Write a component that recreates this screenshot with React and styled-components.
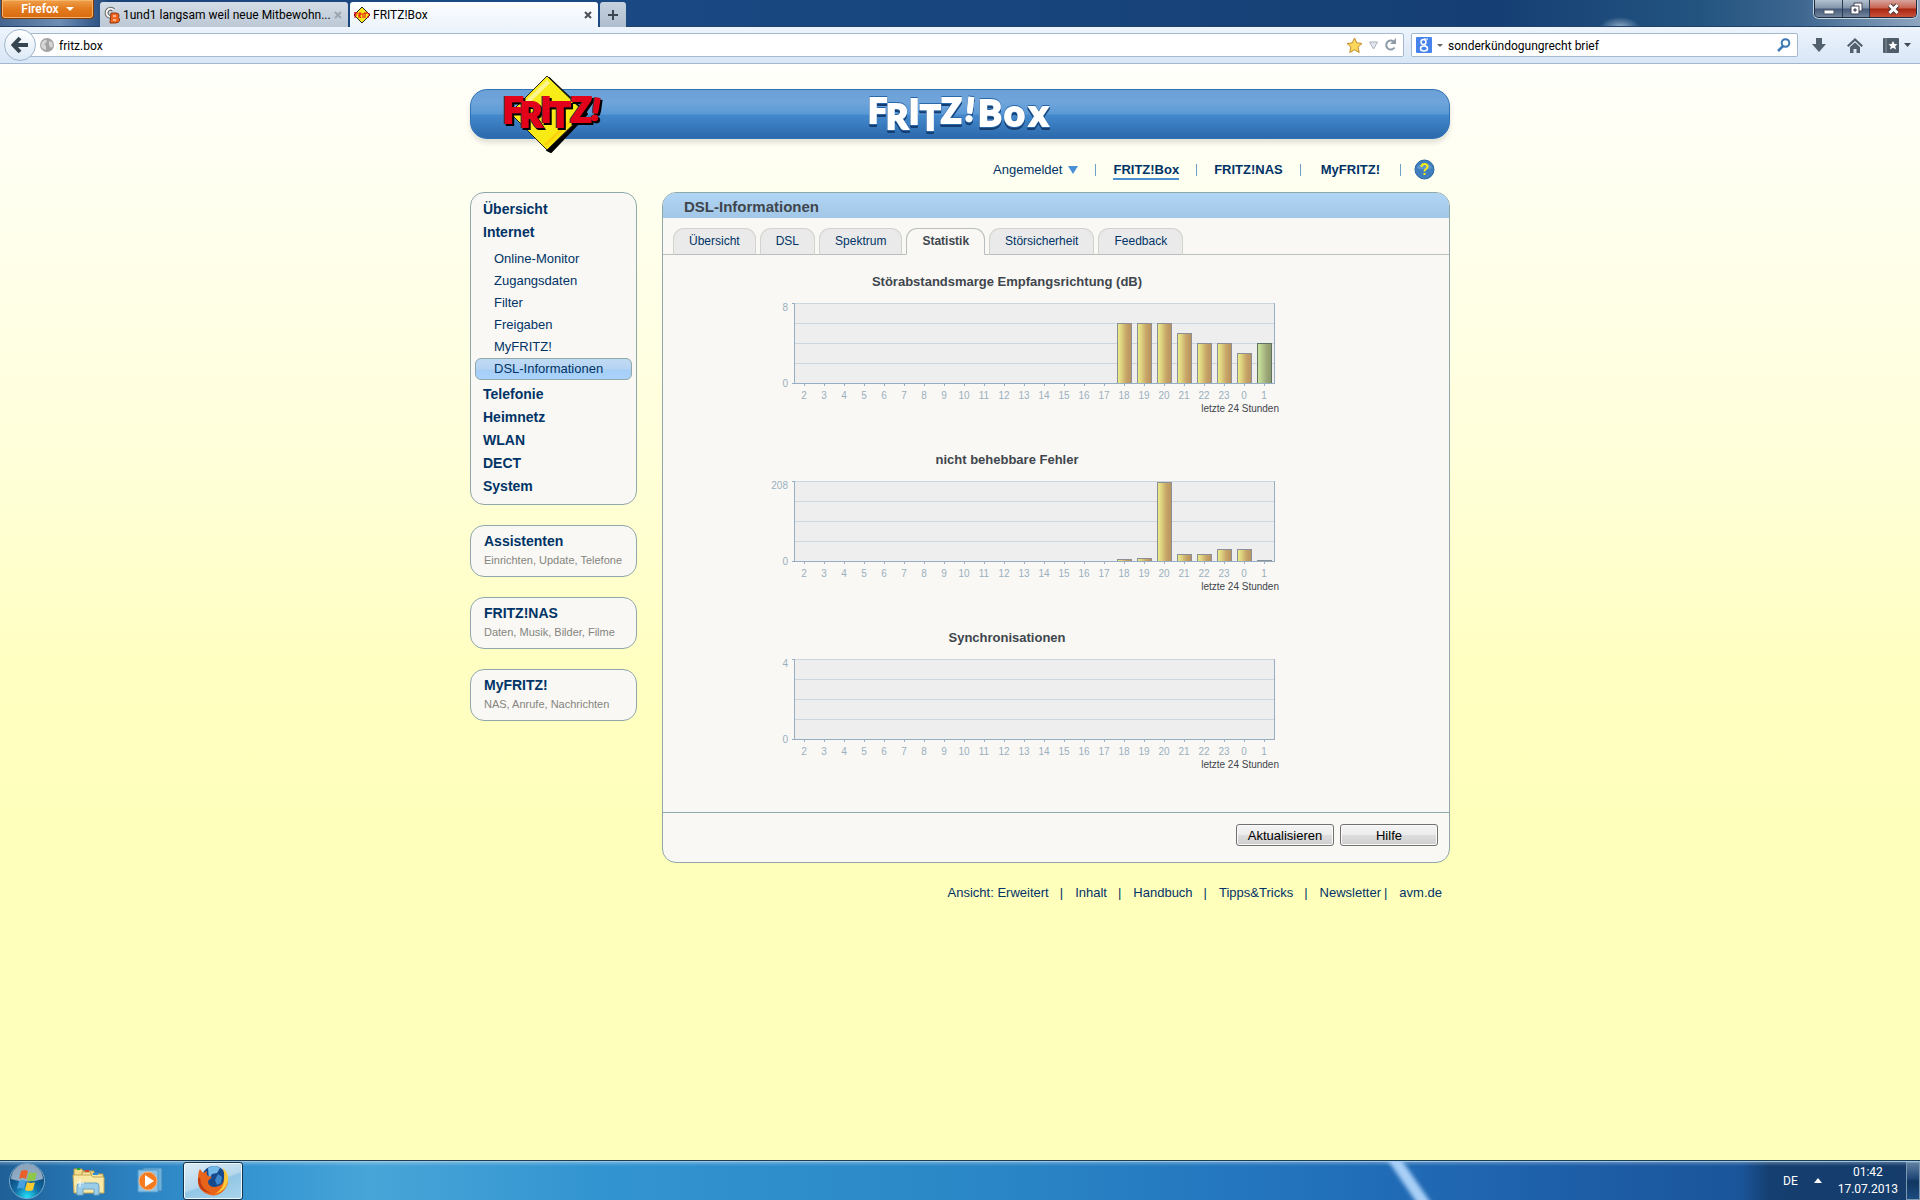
import React from 'react'
import styled, { createGlobalStyle, css } from 'styled-components'

const GlobalStyle = createGlobalStyle`
  * {
    box-sizing: border-box;
  }

  body {
    margin: 0;
    font-family: 'Liberation Sans', Arial, sans-serif;
    font-size: 13px;
  }

  button,
  input {
    font-family: inherit;
    margin: 0;
  }

  a {
    color: inherit;
    text-decoration: none;
  }

  h1,
  h2,
  p,
  ul {
    margin: 0;
    padding: 0;
  }

  svg {
    display: block;
    flex: none;
  }
`

const Desktop = styled.div`
  display: flex;
  flex-direction: column;
  min-height: 100vh;
`

/* ---- browser chrome ---- */

const TitleBar = styled.div`
  align-items: flex-start;
  background:
    radial-gradient(ellipse 20px 10px at 1620px 27px, #8fa8c2, transparent),
    linear-gradient(90deg, #45658f 0, #6d8db3 60px, #1c4378 110px, #1a4a85 500px, #153f74 1500px, #235480 1700px, #3d6690 1800px, #8ea6bf 100%);
  border-bottom: 1px solid #20426b;
  display: flex;
  font-family: Roboto, 'Noto Sans', sans-serif;
  font-size: 12px;
  height: 27px;
  padding-left: 1px;
`

const FirefoxButton = styled.button`
  align-items: center;
  background: linear-gradient(#f0a04c, #e27a1c 50%, #d86a10);
  border: 1px solid #7c3c0e;
  border-radius: 0 0 4px 4px;
  border-top: 0;
  box-shadow: inset 0 0 0 1px #f7b56a;
  color: #fff;
  display: flex;
  font-size: 12px;
  font-weight: 600;
  gap: 7px;
  height: 19px;
  justify-content: center;
  line-height: 16px;
  padding: 0;
  width: 93px;
`

const BrowserTabs = styled.div`
  display: flex;
  gap: 2px;
  margin-left: 6px;
  padding-top: 2px;
`

const BrowserTab = styled.div`
  align-items: center;
  background: ${(props) => (props.$active ? 'linear-gradient(#fdfeff, #edf3fb)' : 'linear-gradient(#d3dce6, #bcc8d5)')};
  border-radius: 3px 3px 0 0;
  color: #000;
  display: flex;
  gap: 3px;
  height: ${(props) => (props.$active ? '26px' : '25px')};
  padding: 0 6px 0 4px;
  width: 248px;
`

const BrowserTabTitle = styled.span`
  flex: 1;
  white-space: nowrap;
`

const PlainButton = styled.button`
  align-items: center;
  background: none;
  border: 0;
  display: flex;
  justify-content: center;
  padding: 0;
`

const NewTab = styled(PlainButton)`
  background: linear-gradient(#c5d1de, #aebdce);
  border-radius: 3px 3px 0 0;
  height: 25px;
  width: 26px;
`

const WindowControls = styled.div`
  border: 1px solid #1d2b3d;
  border-radius: 0 0 5px 5px;
  border-top: 0;
  box-shadow: 0 0 0 1px #c4d3e2;
  display: flex;
  height: 18px;
  margin-left: auto;
  margin-right: 3px;
  overflow: hidden;
`

const WindowButton = styled(PlainButton)`
  background: ${(props) =>
    props.$close
      ? 'linear-gradient(#d8a69e, #c8604e 48%, #a8250f 52%, #c9513a)'
      : 'linear-gradient(#b3c1d0, #8294aa 48%, #46597a 52%, #72879f)'};
  border-left: ${(props) => (props.$first ? '0' : '1px solid #2b3b50')};
  height: 100%;
  width: ${(props) => (props.$close ? '47px' : '27px')};
`

const NavBar = styled.div`
  align-items: center;
  background: linear-gradient(#edf4fc, #d8e6f6);
  border-bottom: 1px solid #a3b8cf;
  color: #000;
  display: flex;
  font-family: Roboto, 'Noto Sans', sans-serif;
  height: 37px;
  padding: 0 9px 0 4px;
`

const BackButton = styled(PlainButton)`
  background: linear-gradient(#fff, #dce9f7);
  border: 1px solid #9fb5cb;
  border-radius: 50%;
  height: 32px;
  width: 32px;
  z-index: 1;
`

const Field = styled.div`
  align-items: center;
  background: #fff;
  border: 1px solid #a4b9d0;
  border-radius: 2px;
  display: flex;
  gap: 5px;
  height: 24px;
  padding: 0 6px 0 4px;
`

const AddressField = styled(Field)`
  flex: 1;
  margin-left: -7px;
  margin-right: 7px;
  padding-left: 10px;
`

const SearchField = styled(Field)`
  margin-right: 13px;
  width: 387px;
`

const FieldInput = styled.input`
  background: none;
  border: 0;
  color: #000;
  flex: 1;
  font-size: 12px;
  min-width: 0;
  outline: 0;
  padding: 1px 0 0;
`

const ToolbarIcons = styled.div`
  align-items: center;
  display: flex;
  gap: 20px;
`

/* ---- router page ---- */

const Page = styled.div`
  background: linear-gradient(#fffffb 0, #fffff2 100px, #ffffdb 380px, #ffffc2 600px, #ffffbc 760px);
  flex: 1;
  padding: 25px 16px 0;
`

const Container = styled.div`
  color: #003366;
  margin: 0 auto;
  max-width: 980px;
`

const Banner = styled.header`
  background: linear-gradient(#6aa0d6, #6fa5da 12px, #5a99d6 24px, #4489cd 25px, #2b69ac);
  border: 1px solid #2f72b6;
  border-radius: 17px;
  box-shadow: 0 4px 5px #0000001f;
  display: flex;
  height: 50px;
  justify-content: center;
  position: relative;
`

const LogoLink = styled.a`
  left: 28px;
  position: absolute;
  top: -15px;
`

const Lettering = styled.svg`
  font-family: Lato, sans-serif;
  font-weight: 900;
  overflow: visible;
`

const RedLetters = styled.g`
  fill: #e2001a;
  filter: drop-shadow(-1px 0 0 #333) drop-shadow(2px 2px 0 #000);
  stroke: #e2001a;
  stroke-width: 2px;
`

const WhiteLetters = styled.g`
  fill: #fff;
  filter: drop-shadow(0 -1px 0 #2a68aa) drop-shadow(0 1px 0 #2a68aa) drop-shadow(0 2px 0 #153f73);
  stroke: #fff;
  stroke-width: 2px;
`

const TopNav = styled.nav`
  align-items: center;
  display: flex;
  gap: 13px;
  height: 53px;
  justify-content: flex-end;
  padding: 8px 15px 0 0;
`

const TopLinks = styled.div`
  align-items: center;
  display: flex;
  gap: 17px;
`

const TopLink = styled.a`
  align-items: center;
  border-bottom: 2px solid ${(props) => (props.$current ? '#4a8fd0' : 'transparent')};
  display: flex;
  font-weight: ${(props) => (props.$light ? 'normal' : 'bold')};
  gap: 6px;
  line-height: 16px;
  margin: ${(props) => (props.$spaced ? '0 3px' : '0')};
  padding-top: 3px;
`

const Divider = styled.span`
  background: #6f9fca;
  height: 12px;
  width: 1px;
`

const Columns = styled.div`
  align-items: start;
  display: grid;
  gap: 25px;
  grid-template-columns: 167px minmax(0, 1fr);
`

const Sidebar = styled.aside`
  display: grid;
  gap: 20px;
`

const cardLook = css`
  background: #f9f8f4;
  border: 1px solid #8fa8a9;
  border-radius: 14px;
`

const Menu = styled.ul`
  ${cardLook}
  list-style: none;
  padding: 5px 4px 6px;
`

const MenuLink = styled.a`
  display: block;
  font-size: 14px;
  font-weight: bold;
  line-height: 23px;
  padding-left: 8px;
`

const SubMenu = styled.ul`
  list-style: none;
  padding: 4px 0 3px;
`

const SubLink = styled.a`
  border: 1px solid transparent;
  border-radius: 6px;
  display: block;
  line-height: 20px;
  padding-left: 18px;
  ${(props) =>
    props.$current &&
    css`
      background: linear-gradient(#c0daf4, #b5d4f2 50%, #a6cef6 55%, #aad3fd);
      border-color: #8fa8a9;
    `}
`

const ShortcutCard = styled.a`
  ${cardLook}
  display: block;
  padding: 6px 0 7px 13px;
`

const ShortcutTitle = styled.span`
  display: block;
  font-size: 14px;
  font-weight: bold;
  line-height: 19px;
`

const ShortcutText = styled.span`
  color: #85857f;
  display: block;
  font-size: 11px;
  line-height: 18px;
  white-space: nowrap;
`

const Panel = styled.main`
  ${cardLook}
  overflow: hidden;
`

const PanelTitle = styled.h1`
  background: linear-gradient(#b0d5f5, #a3c7e6);
  color: #3f464d;
  font-size: 15px;
  line-height: 25px;
  padding: 1px 0 0 21px;
  height: 25px;
`

const TabRow = styled.div`
  border-bottom: 1px solid #b9bfbf;
  display: flex;
  gap: 4px;
  padding: 10px 10px 0;
`

const Tab = styled.button`
  background: ${(props) => (props.$active ? '#f9f8f4' : '#eaeaea')};
  border: 1px solid ${(props) => (props.$active ? '#b9bfbf' : '#d2d2ce')};
  border-bottom-color: ${(props) => (props.$active ? '#f9f8f4' : '#b9bfbf')};
  border-radius: 11px 11px 0 0;
  color: ${(props) => (props.$active ? '#3f464d' : '#003366')};
  font-size: 12px;
  font-weight: ${(props) => (props.$active ? 'bold' : 'normal')};
  height: 27px;
  margin-bottom: -1px;
  padding: 0 15px 2px;
`

const Charts = styled.div`
  padding: 17px 0 6px 72px;
`

const ChartBlock = styled.section`
  height: 178px;
  width: 544px;
`

const ChartTitle = styled.h2`
  color: #3f464d;
  font-size: 13px;
  line-height: 20px;
  margin-bottom: 4px;
  text-align: center;
`

const ChartNote = styled.p`
  color: #3f464d;
  font-size: 10px;
  line-height: 12px;
  text-align: right;
`

const Actions = styled.div`
  border-top: 1px solid #8fa8a9;
  display: flex;
  gap: 6px;
  justify-content: flex-end;
  padding: 11px 11px 16px;
`

const ActionButton = styled.button`
  background: linear-gradient(#f4f4f4, #ececec 48%, #dddddd 52%, #cfcfcf);
  border: 1px solid #707070;
  border-radius: 3px;
  box-shadow: inset 0 0 0 1px #fbfbfb;
  color: #000;
  font-size: 13px;
  height: 22px;
  padding: 0;
  width: 98px;
`

const Footer = styled.footer`
  display: flex;
  justify-content: flex-end;
  line-height: 16px;
  padding: 22px 8px 22px 0;
`

const FooterBar = styled.span`
  margin: 0 12px 0 ${(props) => (props.$tight ? '3px' : '11px')};
`

/* ---- taskbar ---- */

const Taskbar = styled.div`
  align-items: center;
  background:
    linear-gradient(#ffffff55, transparent 5px),
    linear-gradient(90deg, #1f5f96 0, #2470ad 60px, #2e86c4 150px, #3596d2 260px, #48a5d8 370px, #3294d0 600px, #2a86c6 1000px, #2272bc 1300px, #1f63ae 1500px, #1a559a 1740px, #153f70 1770px, #153c6a 100%);
  border-top: 1px solid #1c3d56;
  box-shadow: inset 0 1px 0 #9cc4df;
  color: #fff;
  display: flex;
  font-family: Roboto, 'Noto Sans', sans-serif;
  font-size: 12px;
  gap: 2px;
  height: 40px;
  overflow: hidden;
  position: relative;
`

const Streak = styled.svg`
  left: 1383px;
  position: absolute;
  top: 0;
`

const TaskButton = styled(PlainButton)`
  height: 38px;
  width: 60px;
  ${(props) =>
    props.$active &&
    css`
      background: linear-gradient(160deg, #dcebf5, #b7d8ec 50%, #93c7e6 55%, #a9d5ec);
      border: 1px solid #16324a;
      border-radius: 3px;
      box-shadow: inset 0 0 0 1px #eef7fc;
    `}
`

const StartButton = styled(PlainButton)`
  margin-left: 8px;
  margin-right: 11px;
  width: 38px;
`

const Tray = styled.div`
  align-items: center;
  display: flex;
  gap: 16px;
  height: 100%;
  margin-left: auto;
`

const Clock = styled.div`
  line-height: 17px;
  margin-right: -8px;
  padding-top: 1px;
  text-align: center;
`

const ShowDesktop = styled(PlainButton)`
  background: linear-gradient(#5f7f9f, #1c4474 45%, #12365f 50%, #1c4b80);
  border: 1px solid #7d99b4;
  height: 38px;
  width: 14px;
`

const hours = [2, 3, 4, 5, 6, 7, 8, 9, 10, 11, 12, 13, 14, 15, 16, 17, 18, 19, 20, 21, 22, 23, 0, 1]

// bars holds the pixel height for each hour that has a value
const charts = [
  {
    id: 'margin',
    title: 'Störabstandsmarge Empfangsrichtung (dB)',
    max: 8,
    bars: { 18: 60, 19: 60, 20: 60, 21: 50, 22: 40, 23: 40, 0: 30, 1: 40 },
    highlight: 1,
  },
  {
    id: 'errors',
    title: 'nicht behebbare Fehler',
    max: 208,
    bars: { 18: 2, 19: 3, 20: 79, 21: 7, 22: 7, 23: 12, 0: 12, 1: 1 },
  },
  { id: 'syncs', title: 'Synchronisationen', max: 4, bars: {} },
]

const subItems = ['Online-Monitor', 'Zugangsdaten', 'Filter', 'Freigaben', 'MyFRITZ!', 'DSL-Informationen']

const shortcuts = [
  { title: 'Assistenten', text: 'Einrichten, Update, Telefone' },
  { title: 'FRITZ!NAS', text: 'Daten, Musik, Bilder, Filme' },
  { title: 'MyFRITZ!', text: 'NAS, Anrufe, Nachrichten' },
]

const tabs = ['Übersicht', 'DSL', 'Spektrum', 'Statistik', 'Störsicherheit', 'Feedback']

const LEFT = 59
const TOP = 7
const BASE = 87

function Chart({ id, title, max, bars, highlight }) {
  return (
    <ChartBlock>
      <ChartTitle>{title}</ChartTitle>
      <svg width="544" height="107" shapeRendering="crispEdges" fontSize="10" fill="#9aafc0">
        <defs>
          <linearGradient id={`${id}-bar`}>
            <stop offset="0.1" stopColor="#e8e488" />
            <stop offset="0.65" stopColor="#c6a468" />
            <stop offset="1" stopColor="#b9945e" />
          </linearGradient>
          <linearGradient id={`${id}-now`}>
            <stop offset="0.1" stopColor="#c6dc98" />
            <stop offset="0.7" stopColor="#9aa678" />
            <stop offset="1" stopColor="#8e9a6c" />
          </linearGradient>
        </defs>
        <rect x={LEFT} y={TOP} width="480" height="80" fill="#eeeeee" />
        {[0, 20, 40, 60].map((y) => (
          <rect key={y} x={LEFT} y={TOP + y} width="480" height="1" fill="#ccd6df" />
        ))}
        {hours.map((hour, i) => {
          const x = LEFT + 3 + i * 20
          const height = bars[hour]
          const now = hour === highlight
          return (
            <g key={hour}>
              {height && (
                <>
                  <rect x={x} y={BASE - height} width="15" height={height} fill={now ? '#5d7263' : '#8c9096'} />
                  <rect
                    x={x + 1}
                    y={BASE - height + 1}
                    width="13"
                    height={height - 1}
                    fill={`url(#${id}-${now ? 'now' : 'bar'})`}
                  />
                </>
              )}
              <rect x={x + 7} y={BASE} width="1" height="3" fill="#98aec4" />
              <text x={x + 7} y={BASE + 16} textAnchor="middle">
                {hour}
              </text>
            </g>
          )
        })}
        <rect x={LEFT} y={TOP} width="1" height="81" fill="#98aec4" />
        <rect x={LEFT + 480} y={TOP} width="1" height="81" fill="#98aec4" />
        <rect x={LEFT - 2} y={TOP} width="3" height="1" fill="#98aec4" />
        <rect x={LEFT - 2} y={BASE} width="483" height="1" fill="#98aec4" />
        <text x="53" y={TOP + 8} textAnchor="end">
          {max}
        </text>
        <text x="53" y={BASE + 4} textAnchor="end">
          0
        </text>
      </svg>
      <ChartNote>letzte 24 Stunden</ChartNote>
    </ChartBlock>
  )
}

function FritzLogo() {
  return (
    <Lettering width="112" height="84" aria-label="FRITZ!">
      <defs>
        <linearGradient id="diamond" x1="0" y1="0" x2="1" y2="1">
          <stop offset="0" stopColor="#fff799" />
          <stop offset="0.25" stopColor="#f8ec1c" />
          <stop offset="0.7" stopColor="#f8ea12" />
          <stop offset="1" stopColor="#fbb80f" />
        </linearGradient>
      </defs>
      <path d="M50 3 88 39 52 77 48 75z" fill="#000" stroke="#000" strokeWidth="2" strokeLinejoin="round" />
      <path d="M48 1 86 38 48 75 11 38z" fill="url(#diamond)" stroke="#222" strokeLinejoin="round" />
      <path d="M48 5 51 8 22 36 14 38z" fill="#fffbc0" opacity="0.7" />
      <path d="M47 71 82 38 78 38 45 69z" fill="#fbc90c" opacity="0.8" />
      <RedLetters>
        <text x="4" y="48" fontSize="36">F</text>
        <text x="21" y="52" fontSize="34">R</text>
        <text x="42" y="47" fontSize="34">I</text>
        <text x="51" y="52" fontSize="34">T</text>
        <text x="72" y="47" fontSize="34">Z</text>
        <text x="92" y="45" fontSize="30" transform="rotate(8 96 40)">!</text>
      </RedLetters>
    </Lettering>
  )
}

function BannerTitle() {
  return (
    <Lettering width="188" height="48" aria-label="FRITZ!Box">
      <WhiteLetters>
        <text x="2" y="33" fontSize="34">F</text>
        <text x="20" y="39" fontSize="34">R</text>
        <text x="43" y="34" fontSize="34">I</text>
        <text x="54" y="40" fontSize="34">T</text>
        <text x="75" y="33" fontSize="34">Z</text>
        <text x="99" y="31" fontSize="32" transform="rotate(6 104 24)">!</text>
        <text x="112" y="36" fontSize="36">B</text>
        <text x="138" y="36" fontSize="36">o</text>
        <text x="163" y="36" fontSize="36">x</text>
      </WhiteLetters>
    </Lettering>
  )
}

function Triangle({ color, up, width = 7, height = 4 }) {
  return (
    <svg width={width} height={height} viewBox="0 0 10 6" preserveAspectRatio="none">
      <path d={up ? 'M0 6h10L5 0z' : 'M0 0h10L5 6z'} fill={color} />
    </svg>
  )
}

function CloseMark({ color }) {
  return (
    <svg width="8" height="8" viewBox="0 0 8 8">
      <path d="M1 1l6 6M7 1L1 7" stroke={color} strokeWidth="2" />
    </svg>
  )
}

function BrowserChrome() {
  return (
    <>
      <TitleBar>
        <FirefoxButton>
          Firefox
          <Triangle color="#fff" width={8} />
        </FirefoxButton>
        <BrowserTabs>
          <BrowserTab>
            <svg width="16" height="18">
              <path d="M9.500 4A4 4 0 1 0 9 10" fill="none" stroke="#666" strokeWidth="4" />
              <path d="M9.500 4A4 4 0 1 0 9 10" fill="none" stroke="#f5f5f5" strokeWidth="2" />
              <path d="M7 7h5q3 0 3 2.500 0 1.500-1 2 2 .5 1.500 3-.5 2.500-4 2.500H6z" fill="#f2661c" stroke="#8d3510" />
              <path d="M9 10h3M9 14h3" stroke="#fff" strokeWidth="1" />
            </svg>
            <BrowserTabTitle>1und1 langsam weil neue Mitbewohn...</BrowserTabTitle>
            <CloseMark color="#9aa6b2" />
          </BrowserTab>
          <BrowserTab $active>
            <svg width="16" height="16">
              <path d="M8 0l8 8-8 8-8-8z" fill="#f8e71c" stroke="#222" />
              <path d="M0 6h4M1 5v6M1 8h2M5 6v5M5 6h2v2H5l2 3M9 6v5M10 6h4M11 6v5M13 10h2M15 6v3" stroke="#e2001a" fill="none" />
            </svg>
            <BrowserTabTitle>FRITZ!Box</BrowserTabTitle>
            <CloseMark color="#4a4f57" />
          </BrowserTab>
          <NewTab aria-label="Neuer Tab">
            <svg width="10" height="10">
              <path d="M5 0v10M0 5h10" stroke="#3c4650" strokeWidth="2" />
            </svg>
          </NewTab>
        </BrowserTabs>
        <WindowControls>
          <WindowButton $first aria-label="Minimieren">
            <svg width="12" height="12">
              <rect x="1" y="7" width="10" height="4" fill="#fff" stroke="#4a5565" />
            </svg>
          </WindowButton>
          <WindowButton aria-label="Verkleinern">
            <svg width="13" height="13">
              <path d="M4 1h8v8H4z" fill="#fff" stroke="#445" />
              <path d="M1 4h8v8H1z" fill="#fff" stroke="#445" />
              <path d="M4 7h2v2H4z" fill="#8593a5" stroke="#445" />
            </svg>
          </WindowButton>
          <WindowButton $close aria-label="Schließen">
            <svg width="13" height="12">
              <path d="M2.500 2l8 8M10.500 2l-8 8" stroke="#4c3a3a" strokeWidth="5" />
              <path d="M2.500 2l8 8M10.500 2l-8 8" stroke="#fff" strokeWidth="3" />
            </svg>
          </WindowButton>
        </WindowControls>
      </TitleBar>
      <NavBar>
        <BackButton aria-label="Zurück">
          <svg width="18" height="18">
            <path d="M9 2L2.500 9 9 16M3 9h14" fill="none" stroke="#36454f" strokeWidth="4" />
          </svg>
        </BackButton>
        <AddressField>
          <svg width="14" height="14">
            <circle cx="7" cy="7" r="7" fill="#a3a3a3" />
            <path d="M2 4q3-3 5-2l-1 3-2 1 2 2v4Q1 11 1 7zM9 3l3 1 1 4-2 2-2-3z" fill="#d6d6d6" />
          </svg>
          <FieldInput aria-label="Adresse" defaultValue="fritz.box" />
          <svg width="17" height="17" viewBox="0 0 17 17">
            <path d="M8.500 1l2.300 4.900 5.200.6-3.900 3.600 1.100 5.400-4.700-2.700-4.700 2.700 1.100-5.400L1 6.500l5.200-.6z" fill="#fbd75b" stroke="#c58a2b" />
          </svg>
          <svg width="11" height="9">
            <path d="M1.500 1h8l-4 7z" fill="#e3e7ee" stroke="#a7b1c0" />
          </svg>
          <svg width="13" height="14">
            <path d="M10.500 9.500A4.500 4.500 0 1 1 9.500 3.500" fill="none" stroke="#8f9ba8" strokeWidth="2" />
            <path d="M12 0v6H6z" fill="#8f9ba8" />
          </svg>
        </AddressField>
        <SearchField>
          <svg width="16" height="16">
            <rect width="16" height="16" rx="1" fill="#4683ea" />
            <circle cx="7.500" cy="5" r="2.500" fill="none" stroke="#fff" strokeWidth="1.500" />
            <ellipse cx="8" cy="11.500" rx="3.500" ry="2.500" fill="none" stroke="#fff" strokeWidth="1.500" />
            <path d="M8 2h4M8 7l2 2" stroke="#fff" />
          </svg>
          <Triangle color="#666" width={6} height={3} />
          <FieldInput aria-label="Suche" defaultValue="sonderkündogungrecht brief" />
          <svg width="14" height="14">
            <circle cx="8.500" cy="5" r="3.800" fill="none" stroke="#3d78b4" strokeWidth="2" />
            <path d="M6 8l-5 5" stroke="#3d78b4" strokeWidth="2.500" />
          </svg>
        </SearchField>
        <ToolbarIcons>
          <PlainButton aria-label="Downloads">
            <svg width="16" height="15">
              <path d="M5 0h6v6h4l-7 8-7-8h4z" fill="#52606e" />
            </svg>
          </PlainButton>
          <PlainButton aria-label="Startseite">
            <svg width="16" height="15">
              <path d="M8 0l8 7.500-1.500 1.500L8 3 1.500 9 0 7.500zM3 9l5-4.500L13 9v6H9.500v-4h-3v4H3z" fill="#52606e" />
            </svg>
          </PlainButton>
          <PlainButton aria-label="Lesezeichen">
            <svg width="28" height="15">
              <rect width="16" height="15" rx="1" fill="#4f5c69" />
              <path d="M3 0v15" stroke="#8793a0" />
              <path d="M10 3l1.500 3 3 .3-2.300 2 .8 3.200-3-1.700-3 1.700.8-3.200-2.300-2 3-.3z" fill="#fff" />
              <path d="M21 5h7l-3.500 4z" fill="#3f4b57" />
            </svg>
          </PlainButton>
        </ToolbarIcons>
      </NavBar>
    </>
  )
}

function WindowsTaskbar() {
  return (
    <Taskbar>
      <Streak width="60" height="40">
        <defs>
          <filter id="soft">
            <feGaussianBlur stdDeviation="2" />
          </filter>
        </defs>
        <path d="M0-8h14l38 56H38z" fill="#a9d0f7" filter="url(#soft)" />
      </Streak>
      <StartButton aria-label="Start">
        <svg width="38" height="38" viewBox="0 0 38 38">
          <defs>
            <radialGradient id="orb" cx="0.5" cy="0.95" r="0.8">
              <stop offset="0" stopColor="#22e0f8" />
              <stop offset="0.45" stopColor="#136fa6" />
              <stop offset="1" stopColor="#0c3f70" />
            </radialGradient>
          </defs>
          <circle cx="19" cy="19" r="17.500" fill="url(#orb)" stroke="#79a9c9" />
          <path d="M3 17a16 15 0 0 1 32 0q-16 5-32 0z" fill="#c5d3df" opacity="0.7" />
          <path d="M13 9q4-2 7 0l-2 8q-3-2-7 0z" fill="#e8602c" />
          <path d="M21 10q4 2 8 0l-2 8q-4 2-8 0z" fill="#8fc74a" />
          <path d="M11 19q4-2 7 0l-2 8q-3-2-7 0z" fill="#48a0e0" />
          <path d="M19 20q4 2 8 0l-2 8q-4 2-8 0z" fill="#fbc932" />
        </svg>
      </StartButton>
      <TaskButton aria-label="Explorer">
        <svg width="34" height="30" viewBox="0 0 34 30">
          <path d="M2 3h8l1 2h11v6H2z" fill="#f3dd88" stroke="#b79a45" />
          <path d="M10 6h8l1 2h12v7H10z" fill="#f7e6a2" stroke="#b79a45" />
          <path d="M1 9h18l2 2h11v16H2z" fill="#f8e9a8" stroke="#c3a650" />
          <path d="M5 2h3v2H5z" fill="#2aa52a" />
          <path d="M13 4h4v2h-4z" fill="#d9412b" />
          <path d="M21 7h5v2h-5z" fill="#2d8fe0" />
          <path d="M5 29V20q0-3 3-3h16q3 0 3 3v9h-5v-6H11v6z" fill="#9ccde8" stroke="#6ba4c4" />
          <path d="M5 17h7M8 13v8" stroke="#fff" strokeWidth="1" />
        </svg>
      </TaskButton>
      <TaskButton aria-label="Media Player">
        <svg width="28" height="28" viewBox="0 0 28 28">
          <path d="M6 1h19v23H6z" fill="#6eb2dc" stroke="#3d86b8" />
          <path d="M1 3h20v22H1z" fill="#8cc3e6" stroke="#4f97c8" />
          <circle cx="11" cy="14" r="9" fill="#f47a20" stroke="#fbb477" />
          <path d="M8 8v12l9-6z" fill="#fff" />
        </svg>
      </TaskButton>
      <TaskButton $active aria-label="Firefox">
        <svg width="34" height="34" viewBox="0 0 34 34">
          <circle cx="18" cy="14" r="12" fill="#174a8c" />
          <path d="M12 4q6-4 12 0l-3 5-5 1-3 5z" fill="#74b9e8" />
          <path d="M22 10l4 3-1 6-4 2-2-5z" fill="#3d86cc" />
          <path d="M27 5q9 11 2 20-6 8-15 6-13-4-12-16Q2 8 4 5l3 4 4-2q-1 3 1 5l4 1-4 4q0 6 7 6 9-1 9-9 1-5-1-9z" fill="#e8641b" />
          <path d="M27 4q6 5 5 13-2 10-13 13 8-5 9-13 1-7-1-13z" fill="#fbc93a" />
          <path d="M4 13q0 12 11 16-13-1-13-14z" fill="#c23a12" />
        </svg>
      </TaskButton>
      <Tray>
        <span>DE</span>
        <Triangle color="#fff" up width={8} height={5} />
        <Clock>
          01:42
          <br />
          17.07.2013
        </Clock>
        <ShowDesktop aria-label="Desktop anzeigen" />
      </Tray>
    </Taskbar>
  )
}

export default function App() {
  return (
    <Desktop>
      <GlobalStyle />
      <BrowserChrome />
      <Page>
        <Container>
          <Banner>
            <LogoLink href="#start">
              <FritzLogo />
            </LogoLink>
            <BannerTitle />
          </Banner>
          <TopNav>
            <TopLinks>
              <TopLink href="#konto" $light>
                Angemeldet
                <Triangle color="#4a8fd6" width={10} height={8} />
              </TopLink>
              <Divider />
              <TopLink href="#box" $current>
                FRITZ!Box
              </TopLink>
              <Divider />
              <TopLink href="#nas">FRITZ!NAS</TopLink>
              <Divider />
              <TopLink href="#my" $spaced>
                MyFRITZ!
              </TopLink>
              <Divider />
            </TopLinks>
            <a href="#hilfe" aria-label="Hilfe">
              <svg width="21" height="21">
                <circle cx="10.500" cy="10.500" r="9.500" fill="#3f7fbd" stroke="#2c66a3" />
                <path d="M3 9a8 7 0 0 1 15 0q-8 3-15 0z" fill="#79aad6" opacity="0.6" />
                <path d="M7.500 8q0-3 3-3t3 2.500q0 1.500-1.500 2.500T10.500 12.500M10.500 14v2" fill="none" stroke="#f8ea12" strokeWidth="2" />
              </svg>
            </a>
          </TopNav>
          <Columns>
            <Sidebar>
              <Menu>
                <li>
                  <MenuLink href="#uebersicht">Übersicht</MenuLink>
                </li>
                <li>
                  <MenuLink href="#internet">Internet</MenuLink>
                  <SubMenu>
                    {subItems.map((item) => (
                      <li key={item}>
                        <SubLink href="#internet" $current={item === 'DSL-Informationen'}>
                          {item}
                        </SubLink>
                      </li>
                    ))}
                  </SubMenu>
                </li>
                {['Telefonie', 'Heimnetz', 'WLAN', 'DECT', 'System'].map((item) => (
                  <li key={item}>
                    <MenuLink href="#menu">{item}</MenuLink>
                  </li>
                ))}
              </Menu>
              {shortcuts.map(({ title, text }) => (
                <ShortcutCard key={title} href="#shortcut">
                  <ShortcutTitle>{title}</ShortcutTitle>
                  <ShortcutText>{text}</ShortcutText>
                </ShortcutCard>
              ))}
            </Sidebar>
            <Panel>
              <PanelTitle>DSL-Informationen</PanelTitle>
              <TabRow>
                {tabs.map((tab) => (
                  <Tab key={tab} $active={tab === 'Statistik'}>
                    {tab}
                  </Tab>
                ))}
              </TabRow>
              <Charts>
                {charts.map((chart) => (
                  <Chart key={chart.id} {...chart} />
                ))}
              </Charts>
              <Actions>
                <ActionButton>Aktualisieren</ActionButton>
                <ActionButton>Hilfe</ActionButton>
              </Actions>
            </Panel>
          </Columns>
          <Footer>
            <a href="#ansicht">Ansicht: Erweitert</a>
            <FooterBar>|</FooterBar>
            <a href="#inhalt">Inhalt</a>
            <FooterBar>|</FooterBar>
            <a href="#handbuch">Handbuch</a>
            <FooterBar>|</FooterBar>
            <a href="#tipps">Tipps&amp;Tricks</a>
            <FooterBar>|</FooterBar>
            <a href="#newsletter">Newsletter</a>
            <FooterBar $tight>|</FooterBar>
            <a href="#avm">avm.de</a>
          </Footer>
        </Container>
      </Page>
      <WindowsTaskbar />
    </Desktop>
  )
}
